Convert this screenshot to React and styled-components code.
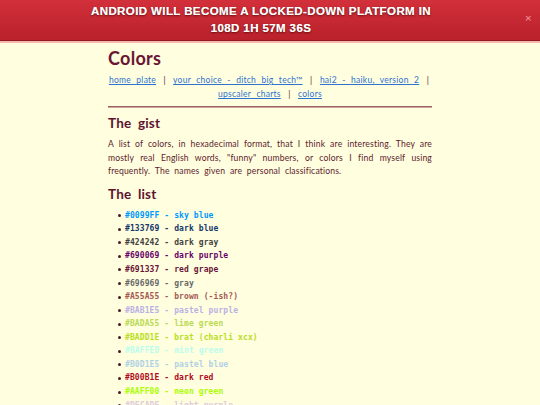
import React from 'react';
import styled, { createGlobalStyle } from 'styled-components';

const GlobalStyle = createGlobalStyle`
  html, body {
    margin: 0;
    padding: 0;
    background: #fffedf;
  }
  body {
    font-family: Lato, "DejaVu Sans", sans-serif;
    color: #5e1a2c;
    overflow: hidden;
  }
`;

const colors = [
  ['#0099FF', 'sky blue'],
  ['#133769', 'dark blue'],
  ['#424242', 'dark gray'],
  ['#690069', 'dark purple'],
  ['#691337', 'red grape'],
  ['#696969', 'gray'],
  ['#A55A55', 'brown (-ish?)'],
  ['#BAB1E5', 'pastel purple'],
  ['#BADA55', 'lime green'],
  ['#BADD1E', 'brat (charli xcx)'],
  ['#BAFFED', 'mint green'],
  ['#B0D1E5', 'pastel blue'],
  ['#B00B1E', 'dark red'],
  ['#AAFF00', 'neon green'],
  ['#DECADE', 'light purple'],
];

const App = () => {
  return (
    <>
      <GlobalStyle />
      <Banner>
        <BannerText>
          Android will become a locked-down platform in
          <br />
          108d 1h 57m 36s
        </BannerText>
        <Close>×</Close>
      </Banner>

      <Main>
        <Title>Colors</Title>
        <Nav>
          <NavLink href="#">home plate</NavLink> <Sep>|</Sep>{' '}
          <NavLink href="#">your choice - ditch big tech™</NavLink> <Sep>|</Sep>{' '}
          <NavLink href="#">hai2 - haiku, version 2</NavLink> <Sep>|</Sep>
          <br />
          <NavLink href="#">upscaler charts</NavLink> <Sep>|</Sep>{' '}
          <NavLink href="#">colors</NavLink>
        </Nav>
        <Rule />

        <Heading>The gist</Heading>
        <Text>
          A list of colors, in hexadecimal format, that I think are interesting. They are
          mostly real English words, "funny" numbers, or colors I find myself using
          frequently. The names given are personal classifications.
        </Text>

        <Heading>The list</Heading>
        <List>
          {colors.map(([hex, name]) => (
            <Item key={hex} $color={hex}>
              {hex} - {name}
            </Item>
          ))}
        </List>
      </Main>
    </>
  );
};

const Banner = styled.div`
  position: relative;
  height: 40px;
  padding-right: 18px;
  background: linear-gradient(#d2303a, #b9212b);
  border-bottom: 1px solid #8e1a20;
  box-shadow: 0 2px 0 #f4b8b0;
  display: flex;
  align-items: center;
  justify-content: center;
`;

const BannerText = styled.div`
  font-family: "Liberation Sans", Arial, sans-serif;
  font-weight: bold;
  font-size: 11.5px;
  line-height: 17px;
  letter-spacing: 0.4px;
  text-transform: uppercase;
  text-align: center;
  color: #ffffff;
  text-shadow: 0 1px 2px rgba(60, 0, 0, 0.7), 0 0 0.4px #fff;
`;

const Close = styled.span`
  position: absolute;
  right: 8px;
  top: 13px;
  font-family: "DejaVu Sans", sans-serif;
  font-size: 9px;
  color: #f5a0a8;
`;

const Main = styled.main`
  width: 324px;
  margin: 0 auto;
  padding-top: 6px;
`;

const Title = styled.h1`
  margin: 0;
  font-size: 18px;
  line-height: 22px;
  font-weight: 700;
  color: #6a1533;
  letter-spacing: 0.3px;
`;

const Nav = styled.nav`
  margin-top: 4px;
  text-align: center;
  font-size: 8.5px;
  line-height: 14px;
  word-spacing: 3px;
  letter-spacing: 0.25px;
`;

const NavLink = styled.a`
  color: #2f73d0;
  text-decoration: underline;
`;

const Sep = styled.span`
  color: #5e1a2c;
  padding: 0 2px;
`;

const Rule = styled.hr`
  margin: 5px 0 0;
  border: none;
  border-top: 1px solid #9a6464;
  border-bottom: 1px solid #c9a7a0;
`;

const Heading = styled.h2`
  margin: 7px 0 0;
  font-size: 13.5px;
  line-height: 17px;
  font-weight: 700;
  color: #5e1430;
  word-spacing: 3px;
  letter-spacing: 0.2px;
`;

const Text = styled.p`
  margin: 6px 0 0;
  font-size: 8.6px;
  line-height: 13.5px;
  text-align: justify;
  word-spacing: 2.4px;
  letter-spacing: 0.15px;
`;

const List = styled.ul`
  margin: 6.2px 0 0;
  padding-left: 17px;
  list-style: none;
`;

const Item = styled.li`
  position: relative;
  font-family: "DejaVu Sans Mono", monospace;
  font-weight: bold;
  font-size: 8px;
  line-height: 13.57px;
  letter-spacing: 0.1px;
  color: ${(p) => p.$color};

  &::before {
    content: '';
    position: absolute;
    left: -7px;
    top: 5.5px;
    width: 3px;
    height: 3px;
    border-radius: 50%;
    background: #4a1a26;
  }
`;

export default App;
